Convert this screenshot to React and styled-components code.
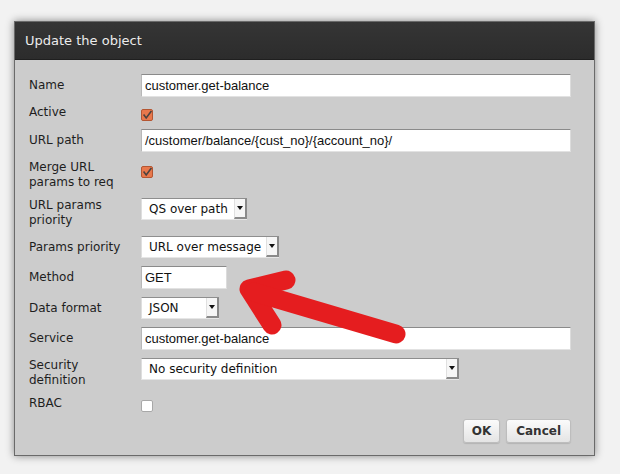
import styled, { createGlobalStyle } from "styled-components";

const Global = createGlobalStyle`
  html, body {
    margin: 0;
    padding: 0;
    background: #f2f2f2;
  }
  body {
    font-family: "DejaVu Sans", sans-serif;
  }
`;

const Page = styled.div`
  width: 620px;
  height: 474px;
  padding: 21px 0 0 14px;
  box-sizing: border-box;
  position: relative;
`;

const Dialog = styled.div`
  width: 581px;
  box-sizing: border-box;
  background: #cccccc;
  border: 1px solid #6a6a6a;
  box-shadow: 0 0 8px rgba(0, 0, 0, 0.45);
`;

const TitleBar = styled.div`
  height: 37px;
  background: linear-gradient(#353535, #2c2c2c);
  border-bottom: 1px solid #1f1f1f;
  display: flex;
  align-items: center;
  padding-left: 10px;
  color: #ececec;
  font-size: 13px;
`;

const Body = styled.div`
  padding: 10px 23px 12px 14px;
`;

const Row = styled.div`
  display: grid;
  grid-template-columns: 112px 1fr;
  align-items: start;
  padding: 4px 0;
`;

const Label = styled.div`
  font-size: 12px;
  line-height: 15px;
  color: #1e1e1e;
  padding-top: ${(p) => (p.$field ? "4px" : "0")};
`;

const TextInput = styled.div`
  box-sizing: border-box;
  height: 23px;
  width: ${(p) => p.$width || "430px"};
  background: #fff;
  border-top: 1px solid #8a8a8a;
  border-left: 1px solid #b8b8b8;
  border-right: 1px solid #dcdcdc;
  border-bottom: 1px solid #e2e2e2;
  padding: 0 3px;
  display: flex;
  align-items: center;
  font-family: "Liberation Sans", Arial, sans-serif;
  font-size: 13px;
  color: #111;
  white-space: nowrap;
`;

const SelectBox = styled.div`
  box-sizing: border-box;
  height: 22px;
  width: ${(p) => p.$width};
  background: #fff;
  border-top: 1px solid #8e8e8e;
  border-left: 1px solid #dedede;
  border-bottom: 1px solid #e6e6e6;
  display: flex;
  align-items: stretch;
  font-size: 12px;
  color: #111;
`;

const SelectText = styled.div`
  flex: 1;
  display: flex;
  align-items: center;
  padding-left: 7px;
  white-space: nowrap;
  overflow: hidden;
`;

const SelectArrow = styled.div`
  width: 10px;
  background: #f6f6f6;
  border-left: 1px solid #e0e0e0;
  border-right: 2px solid #8a8a8a;
  border-bottom: 2px solid #8a8a8a;
  display: flex;
  align-items: center;
  justify-content: center;

  &::after {
    content: "";
    border-left: 3px solid transparent;
    border-right: 3px solid transparent;
    border-top: 4px solid #111;
  }
`;

const CheckWrap = styled.div`
  margin-top: ${(p) => p.$top}px;
  width: 12px;
  height: 12px;
  display: flex;
`;

const Footer = styled.div`
  display: flex;
  justify-content: flex-end;
  gap: 6px;
  padding-top: 3px;
`;

const Button = styled.button`
  height: 24px;
  padding: 0 ${(p) => (p.$wide ? "9px" : "8px")};
  border: 1px solid #bdbdbd;
  border-radius: 3px;
  background: linear-gradient(#fbfbfb, #e4e4e4);
  box-shadow: 0 1px 1px rgba(0, 0, 0, 0.12);
  font-family: "DejaVu Sans", sans-serif;
  font-weight: bold;
  font-size: 12px;
  color: #333;
`;

const Overlay = styled.svg`
  position: absolute;
  left: 0;
  top: 0;
  pointer-events: none;
`;

const Select = ({ width, value }) => (
  <SelectBox $width={width}>
    <SelectText>{value}</SelectText>
    <SelectArrow />
  </SelectBox>
);

const Checkbox = ({ checked, top }) => (
  <CheckWrap $top={top}>
    <svg width="12" height="12" viewBox="0 0 12 12">
      {checked ? (
        <>
          <rect x="0.5" y="0.5" width="11" height="11" rx="1.5" fill="#e8784c" stroke="#b45632" />
          <path d="M2.6 5.6 L5.2 9 L10.4 2" fill="none" stroke="#4b4340" strokeWidth="1.6" />
        </>
      ) : (
        <rect x="0.5" y="0.5" width="11" height="11" rx="1.5" fill="#fff" stroke="#a8a8a8" />
      )}
    </svg>
  </CheckWrap>
);

const App = () => {
  return (
    <Page>
      <Global />
      <Dialog>
        <TitleBar>Update the object</TitleBar>
        <Body>
          <Row>
            <Label $field>Name</Label>
            <TextInput>customer.get-balance</TextInput>
          </Row>
          <Row>
            <Label>Active</Label>
            <Checkbox checked top={4} />
          </Row>
          <Row>
            <Label $field>URL path</Label>
            <TextInput>/customer/balance/{"{cust_no}"}/{"{account_no}"}/</TextInput>
          </Row>
          <Row>
            <Label>
              Merge URL
              <br />
              params to req
            </Label>
            <Checkbox checked top={6} />
          </Row>
          <Row>
            <Label>
              URL params
              <br />
              priority
            </Label>
            <Select width="106px" value="QS over path" />
          </Row>
          <Row>
            <Label $field>Params priority</Label>
            <Select width="138px" value="URL over message" />
          </Row>
          <Row>
            <Label $field>Method</Label>
            <TextInput $width="86px">GET</TextInput>
          </Row>
          <Row>
            <Label $field>Data format</Label>
            <Select width="78px" value="JSON" />
          </Row>
          <Row>
            <Label $field>Service</Label>
            <TextInput>customer.get-balance</TextInput>
          </Row>
          <Row>
            <Label>
              Security
              <br />
              definition
            </Label>
            <Select width="318px" value="No security definition" />
          </Row>
          <Row>
            <Label>RBAC</Label>
            <Checkbox top={4} />
          </Row>
          <Footer>
            <Button>OK</Button>
            <Button $wide>Cancel</Button>
          </Footer>
        </Body>
      </Dialog>
      <Overlay width="620" height="474" viewBox="0 0 620 474">
        <g fill="none" stroke="#e51d1f" strokeWidth="19" strokeLinecap="round" strokeLinejoin="round">
          <path d="M286 280 L249 289 L272 325" />
          <path d="M254 292 L396 334" />
        </g>
      </Overlay>
    </Page>
  );
};

export default App;
